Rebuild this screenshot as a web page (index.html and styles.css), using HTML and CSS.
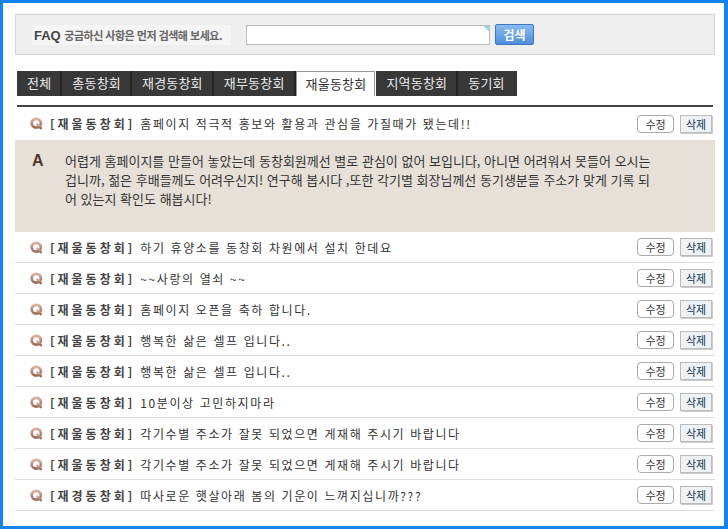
FILE: index.html
```
<!DOCTYPE html>
<html lang="ko">

<head>
	<meta charset="UTF-8">
	<title>FAQ</title>
	<link rel="stylesheet" href="styles.css">
</head>

<body>
	<svg width="0" height="0" class="defs">
		<defs>
			<linearGradient id="qg" x1="0" y1="0" x2="0" y2="1">
				<stop offset="0" stop-color="#d9b09e" />
				<stop offset="1" stop-color="#9a6b5a" />
			</linearGradient>
			<symbol id="qicon" viewBox="0 0 13 13">
				<ellipse cx="6.3" cy="6.2" rx="4.6" ry="4.4" fill="none" stroke="url(#qg)" stroke-width="2.8" />
				<path d="M7.4 7.6 L10.8 11" stroke="url(#qg)" stroke-width="2.6" stroke-linecap="round" />
			</symbol>
		</defs>
	</svg>
	<div class="frame">
		<div class="search-box">
			<div class="search-label"><b>FAQ</b> 궁금하신 사항은 먼저 검색해 보세요.</div>
			<input type="text" class="search-input">
			<button class="search-btn">검색</button>
		</div>

		<ul class="tabs">
			<li>전체</li>
			<li>총동창회</li>
			<li>재경동창회</li>
			<li>재부동창회</li>
			<li class="on">재울동창회</li>
			<li>지역동창회</li>
			<li>동기회</li>
		</ul>

		<div class="faq-list">
			<div class="faq-row first">
				<svg class="q"><use href="#qicon" /></svg>
				<span class="cat">[재울동창회]</span>
				<span class="title">홈페이지 적극적 홍보와 활용과 관심을 가질때가 됐는데!!</span>
				<span class="btn edit">수정</span><span class="btn del">삭제</span>
			</div>
			<div class="faq-answer">
				<span class="a">A</span>
				<p>어렵게 홈페이지를 만들어 놓았는데 동창회원께선 별로 관심이 없어 보입니다, 아니면 어려워서 못들어 오시는<br>겁니까, 젊은 후배들께도 어려우신지! 연구해 봅시다 ,또한 각기별 회장님께선 동기생분들 주소가 맞게 기록 되<br>어 있는지 확인도 해봅시다!</p>
			</div>
			<div class="faq-row">
				<svg class="q"><use href="#qicon" /></svg>
				<span class="cat">[재울동창회]</span>
				<span class="title">하기 휴양소를 동창회 차원에서 설치 한데요</span>
				<span class="btn edit">수정</span><span class="btn del">삭제</span>
			</div>
			<div class="faq-row">
				<svg class="q"><use href="#qicon" /></svg>
				<span class="cat">[재울동창회]</span>
				<span class="title">~~사랑의 열쇠 ~~</span>
				<span class="btn edit">수정</span><span class="btn del">삭제</span>
			</div>
			<div class="faq-row">
				<svg class="q"><use href="#qicon" /></svg>
				<span class="cat">[재울동창회]</span>
				<span class="title">홈페이지 오픈을 축하 합니다.</span>
				<span class="btn edit">수정</span><span class="btn del">삭제</span>
			</div>
			<div class="faq-row">
				<svg class="q"><use href="#qicon" /></svg>
				<span class="cat">[재울동창회]</span>
				<span class="title">행복한 삶은 셀프 입니다..</span>
				<span class="btn edit">수정</span><span class="btn del">삭제</span>
			</div>
			<div class="faq-row">
				<svg class="q"><use href="#qicon" /></svg>
				<span class="cat">[재울동창회]</span>
				<span class="title">행복한 삶은 셀프 입니다..</span>
				<span class="btn edit">수정</span><span class="btn del">삭제</span>
			</div>
			<div class="faq-row">
				<svg class="q"><use href="#qicon" /></svg>
				<span class="cat">[재울동창회]</span>
				<span class="title">10분이상 고민하지마라</span>
				<span class="btn edit">수정</span><span class="btn del">삭제</span>
			</div>
			<div class="faq-row">
				<svg class="q"><use href="#qicon" /></svg>
				<span class="cat">[재울동창회]</span>
				<span class="title">각기수별 주소가 잘못 되었으면 게재해 주시기 바랍니다</span>
				<span class="btn edit">수정</span><span class="btn del">삭제</span>
			</div>
			<div class="faq-row">
				<svg class="q"><use href="#qicon" /></svg>
				<span class="cat">[재울동창회]</span>
				<span class="title">각기수별 주소가 잘못 되었으면 게재해 주시기 바랍니다</span>
				<span class="btn edit">수정</span><span class="btn del">삭제</span>
			</div>
			<div class="faq-row">
				<svg class="q"><use href="#qicon" /></svg>
				<span class="cat">[재경동창회]</span>
				<span class="title">따사로운 햇살아래 봄의 기운이 느껴지십니까???</span>
				<span class="btn edit">수정</span><span class="btn del">삭제</span>
			</div>
		</div>
	</div>
</body>

</html>
```

FILE: styles.css
```
html,
body {
	margin: 0;
	padding: 0;
}

body {
	font-family: "Noto Sans CJK KR", "Liberation Sans", sans-serif;
	font-size: 12px;
	color: #333;
}

.defs {
	position: absolute;
}

.frame {
	box-sizing: border-box;
	width: 728px;
	height: 529px;
	border: 3px solid #1283f0;
	border-right-width: 4px;
	padding: 11px 9px 0 12px;
	background: #fff;
	overflow: hidden;
}

/* search */
.search-box {
	height: 39px;
	border: 1px solid #d6d6d6;
	background: #eeeeee;
	display: flex;
	align-items: center;
	padding-left: 16px;
}

.search-label {
	width: 199px;
	height: 20px;
	line-height: 20px;
	background: #f5f5f5;
	color: #666;
	font-size: 11px;
	font-weight: bold;
	letter-spacing: -0.5px;
	white-space: nowrap;
}

.search-label b {
	font-family: "Liberation Sans", sans-serif;
	font-size: 13px;
	color: #444;
	letter-spacing: 0;
	margin: 0 1px 0 2px;
}

.search-input {
	box-sizing: border-box;
	width: 244px;
	height: 20px;
	margin: 0 0 0 15px;
	border: 1px solid #bbb;
	background: linear-gradient(225deg, #9fd4f0 4px, #fff 4px);
	padding: 0;
}

.search-btn {
	box-sizing: border-box;
	width: 39px;
	height: 21px;
	margin-left: 5px;
	padding: 0;
	border: 1px solid #3d78c0;
	border-radius: 2px;
	background: linear-gradient(#8abbef, #4d8edc);
	color: #fff;
	font-family: "Noto Sans CJK KR", sans-serif;
	font-size: 12px;
	font-weight: bold;
	line-height: 18px;
}

/* tabs */
.tabs {
	list-style: none;
	margin: 16px 0 0 2px;
	padding: 0;
	display: flex;
	height: 25px;
}

.tabs li {
	height: 25px;
	line-height: 24px;
	padding: 0 9px 0 10px;
	background: #383838;
	color: #e8e8e8;
	font-size: 13px;
	letter-spacing: 0.2px;
	border-right: 2px solid #262626;
}

.tabs li:last-child {
	border-right: none;
	padding-right: 12px;
}

.tabs li.on {
	background: #fff;
	color: #333;
	border: 1px solid #999;
	border-bottom: none;
	height: 24px;
	margin-right: 1px;
	padding: 0 8px 0 9px;
}

/* list */
.faq-list {
	margin-top: 9px;
	border-top: 2px solid #444;
	margin-left: 2px;
	margin-right: 2px;
}

.faq-row {
	display: flex;
	align-items: center;
	height: 30px;
	border-bottom: 1px solid #ddd;
	margin: 0 -2px;
	padding: 0 2px 0 15px;
}

.faq-row.first {
	height: 33px;
	border-bottom: none;
}

.q {
	width: 13px;
	height: 13px;
	margin-right: 7px;
}

.cat {
	font-weight: bold;
	color: #444;
	letter-spacing: 3px;
	margin-right: 5px;
}

.title {
	flex: 1;
	letter-spacing: 1.6px;
	color: #333;
}

.btn {
	box-sizing: border-box;
	height: 18px;
	line-height: 16px;
	font-size: 11px;
	text-align: center;
	border: 1px solid #aaa;
}

.btn.edit {
	width: 37px;
	border-radius: 4px;
	background: #fff;
	color: #333;
	margin-right: 6px;
}

.btn.del {
	width: 32px;
	background: #eef2f4;
	color: #135;
	border-color: #bbb;
	box-shadow: 1px 1px 0 #ccc;
	margin-right: 1px;
}

.faq-answer {
	display: flex;
	background: #e6e0d8;
	margin: 0 -2px;
	padding: 11px 0 22px 17px;
	height: 59px;
}

.a {
	font-family: "Liberation Sans", sans-serif;
	font-weight: 900;
	font-size: 16px;
	color: #4f3a2c;
	width: 33px;
	line-height: 20px;
}

.faq-answer p {
	margin: 0;
	font-size: 13px;
	line-height: 19px;
	color: #333;
	white-space: nowrap;
}
```
